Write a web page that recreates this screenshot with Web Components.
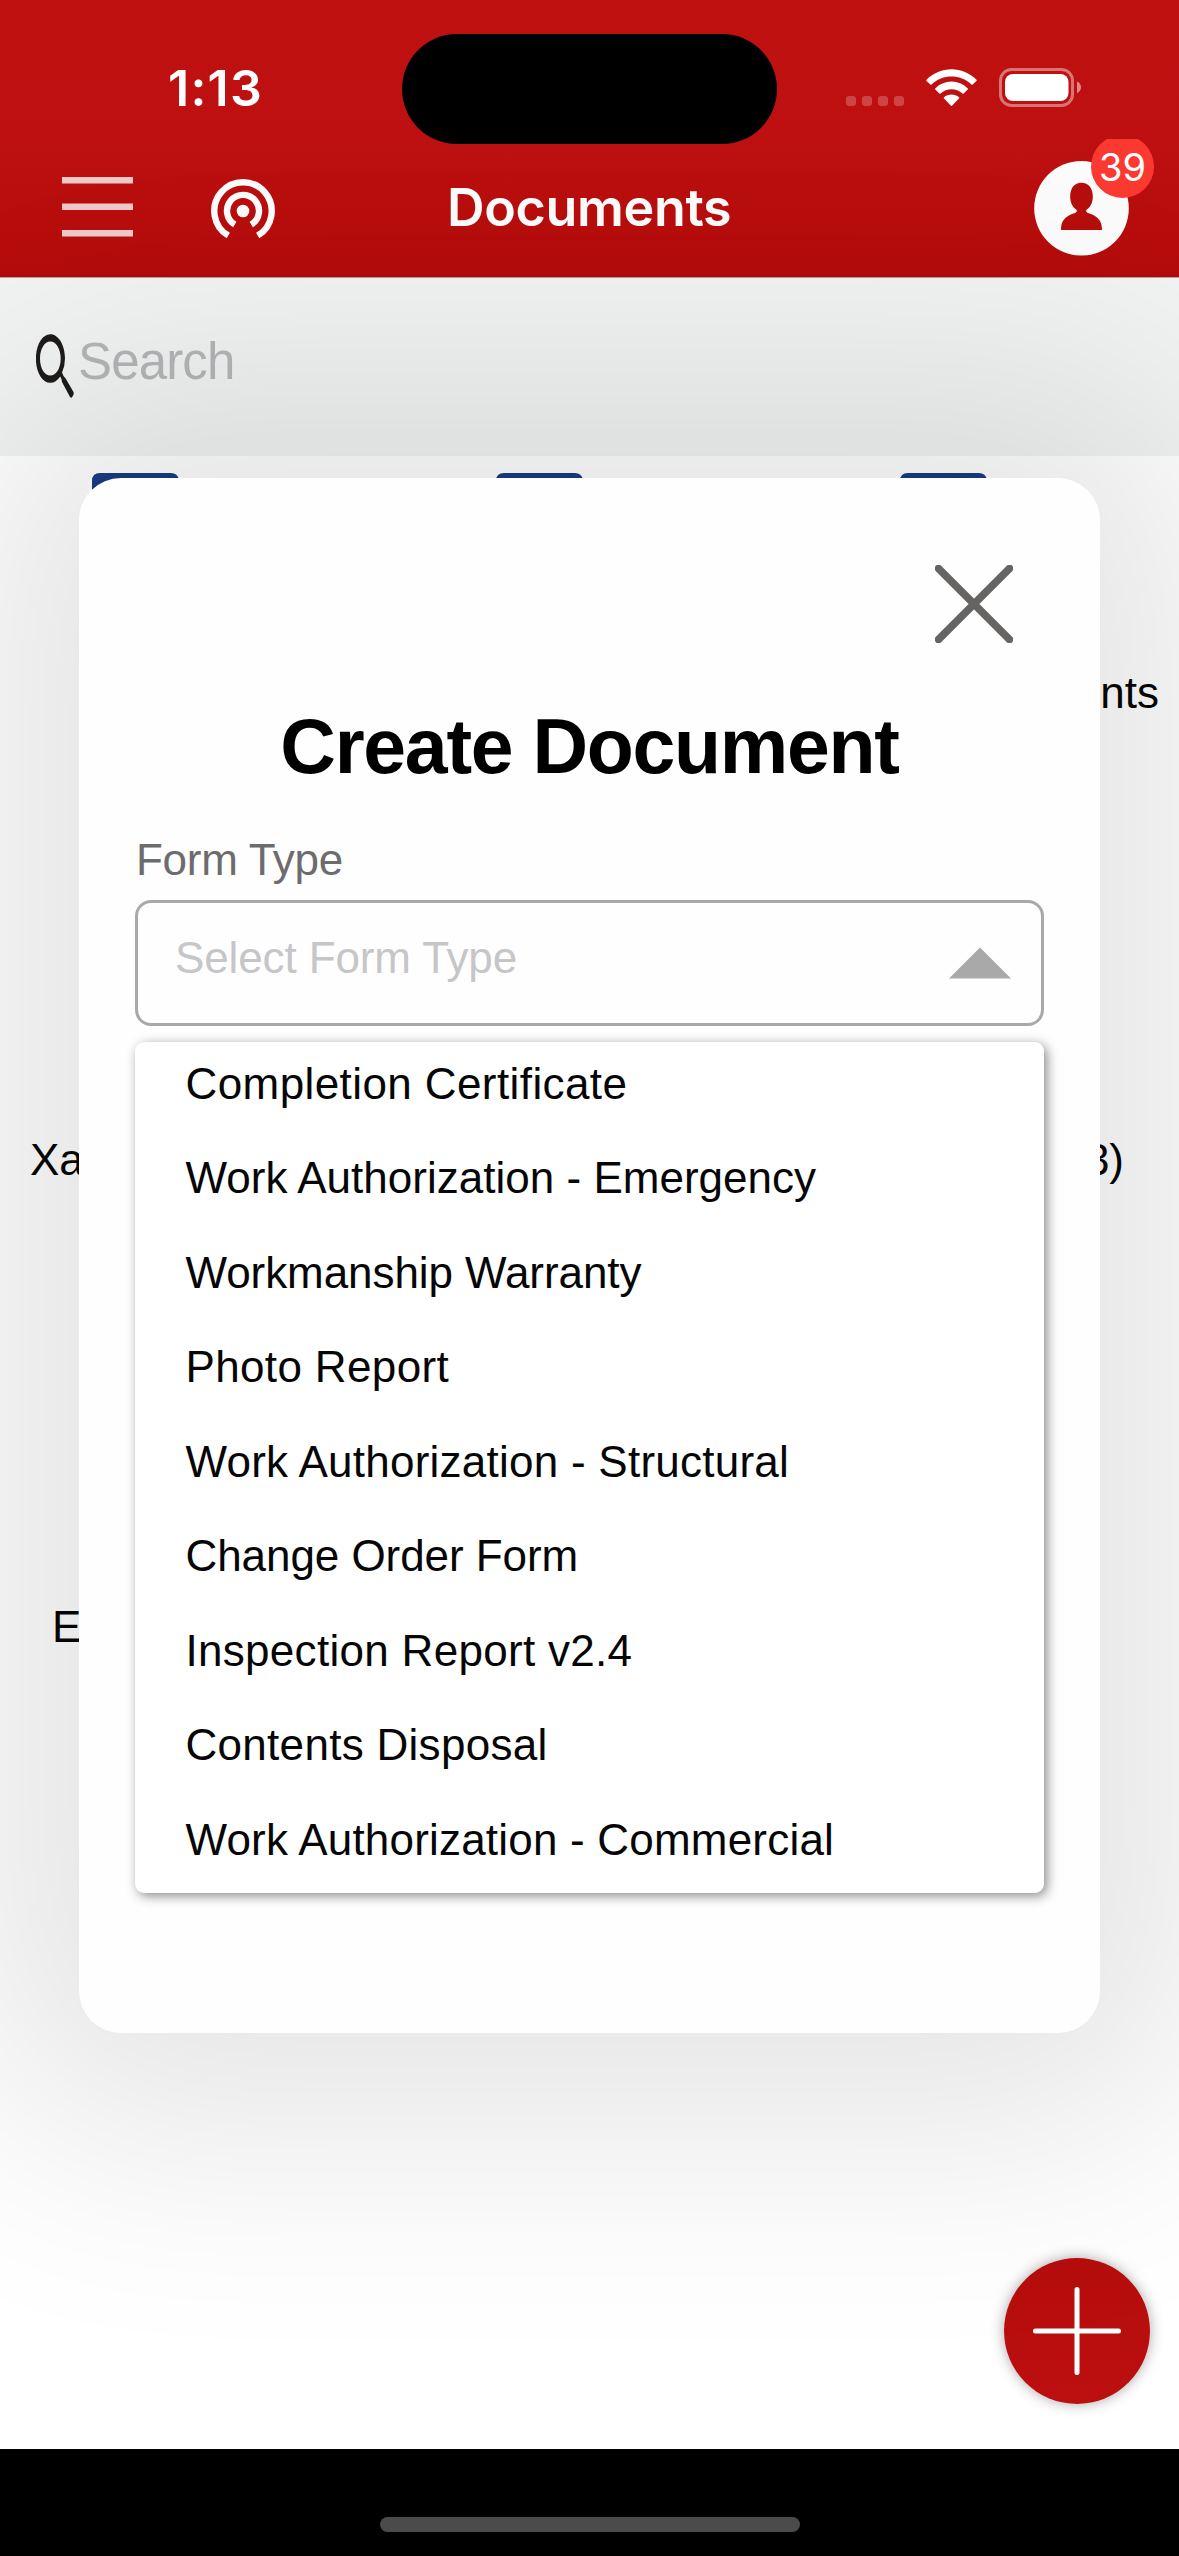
<!DOCTYPE html>
<html lang="en">
<head>
<meta charset="utf-8">
<title>Documents</title>
<style>
html,body{margin:0;padding:0;background:#fff}
body{width:1179px;height:2556px;overflow:hidden;font-family:"Liberation Sans",Arial,sans-serif}
</style>
</head>
<body>
<app-screen>
  <status-bar slot="top" time="1:13"></status-bar>
  <nav-bar slot="top" count="39" heading="Documents"></nav-bar>
  <search-bar slot="page"></search-bar>
  <doc-grid slot="page">
    <doc-tile></doc-tile><doc-tile></doc-tile><doc-tile side="end" inset="53">nts</doc-tile>
    <doc-tile side="start" inset="30">Xa</doc-tile><doc-tile></doc-tile><doc-tile side="end" inset="88">3)</doc-tile>
    <doc-tile side="start" inset="52">E</doc-tile><doc-tile></doc-tile><doc-tile></doc-tile>
  </doc-grid>
  <home-bar slot="page"></home-bar>
  <add-button slot="over"></add-button>
  <modal-card slot="modal" heading="Create Document">
    <form-select label="Form Type" placeholder="Select Form Type">
      <menu-item ink="438">Completion Certificate</menu-item>
      <menu-item ink="633">Work Authorization - Emergency</menu-item>
      <menu-item ink="456">Workmanship Warranty</menu-item>
      <menu-item ink="260">Photo Report</menu-item>
      <menu-item ink="603">Work Authorization - Structural</menu-item>
      <menu-item ink="388">Change Order Form</menu-item>
      <menu-item ink="442">Inspection Report v2.4</menu-item>
      <menu-item ink="357">Contents Disposal</menu-item>
      <menu-item ink="648">Work Authorization - Commercial</menu-item>
    </form-select>
  </modal-card>
</app-screen>
<script>
const define = (name, render, after) => customElements.define(name, class extends HTMLElement {
  connectedCallback() {
    if (this.shadowRoot) return;
    this.attachShadow({ mode: 'open' }).innerHTML = render(this);
    if (after) after(this);
  }
});
const at = (el, n) => el.getAttribute(n) || '';

/* A single line of text, tracked so that its ink is `ink` pixels wide. */
define('text-run', () => `<style>:host{display:block;white-space:pre}</style><slot></slot>`, el => {
  const cs = getComputedStyle(el), ctx = document.createElement('canvas').getContext('2d');
  ctx.font = `${cs.fontWeight} ${cs.fontSize} ${cs.fontFamily}`;
  const t = el.textContent, m = ctx.measureText(t);
  const ink = m.actualBoundingBoxRight + m.actualBoundingBoxLeft;
  el.style.letterSpacing = ((+at(el, 'ink') - ink) / (t.length - 1)).toFixed(3) + 'px';
});

define('app-screen', () => `<style>
:host{display:grid;position:relative;width:1179px;height:2556px;overflow:hidden;background:#fff}
.page,.modal{grid-area:1/1;min-width:0}
.page{display:flex;flex-direction:column;overflow:hidden}
.top{flex:none;height:277px;background:linear-gradient(#c01111 0,#be1010 130px,#b90e0e 200px,#b40b0b 277px);border-bottom:1px solid #a9a3a3}
.modal{display:flex;justify-content:center;align-items:flex-start;padding-top:478px}
.island{position:absolute;left:402px;top:34px;width:375px;height:110px;border-radius:55px;background:#000}
</style><div class="page"><div class="top"><slot name="top"></slot></div><slot name="page"></slot></div><slot name="over"></slot><div class="modal"><slot name="modal"></slot></div><div class="island"></div>`);

define('status-bar', el => `<style>
:host{display:flex;justify-content:space-between;align-items:flex-start;box-sizing:border-box;height:139px;padding:58px 98px 0 168px;color:#fff}
text-run{font:600 50px/60px Inter,sans-serif}
svg{margin-top:10px}
</style><text-run ink="90">${at(el,'time')}</text-run>
<svg width="235" height="39" viewBox="846 68 235 39">
<g fill="#fff" fill-opacity=".22"><rect x="846" y="96" width="10" height="10" rx="3"/><rect x="862" y="96" width="10" height="10" rx="3"/><rect x="878" y="96" width="10" height="10" rx="3"/><rect x="894" y="96" width="10" height="10" rx="3"/></g>
<path fill="#fff" d="M926.5 79.8C940 65.7 963 65.7 976.5 79.8Q977 80.400 976.500 81L972.600 84.600Q972 85 971.400 84.500C960.400 73.900 942.600 73.900 931.600 84.500Q931 85 930.400 84.600L926.500 81Q926 80.400 926.500 79.800ZM935.200 88.400C944.500 79.300 958.500 79.300 967.800 88.400Q968.200 89 967.700 89.500L963.700 93.600Q963.100 94 962.500 93.500C956.300 87.800 946.700 87.800 940.500 93.500Q939.900 94 939.300 93.600L935.300 89.500Q934.800 89 935.200 88.400ZM944 97.300C948.400 93.600 954.600 93.600 959 97.300Q959.500 97.900 959 98.500L952 105.800Q951.500 106.200 951 105.800L944 98.500Q943.500 97.900 944 97.300Z"/>
<rect x="1000.500" y="69.500" width="72" height="36" rx="11" fill="none" stroke="#fff" stroke-opacity=".42" stroke-width="3"/>
<rect x="1005" y="74" width="63.500" height="27" rx="8" fill="#fff"/>
<path d="M1077 81.500Q1081 83.500 1081 87.300T1077 93.200Z" fill="#fff" fill-opacity=".5"/>
</svg>`);

define('nav-bar', el => `<style>
:host{display:flex;align-items:flex-start;box-sizing:border-box;height:138px;padding:0 25px 0 62px;color:#fcfcfc;overflow:hidden}
svg{display:block;flex:none}
.menu{margin-top:38px}.cast{margin:40px 0 0 78px}
text-run{margin-top:39px;font:600 52px/60px Inter,sans-serif}
.title{padding-left:172px}
.avatar{position:relative;margin-left:auto;padding:22px 25px 0 0}
.badge{position:absolute;right:0;top:-4px;width:63px;height:63px;border-radius:50%;background:#fc3930;color:#fff;display:flex;justify-content:center;align-items:center}
.badge text-run{margin-top:1px;font:400 38px/46px Inter,sans-serif}
</style>
<svg class="menu" width="71" height="60" viewBox="0 0 71 60" fill="#efc9ca"><path d="M0 0H71V6.400H0ZM0 26.500H71V32.900H0ZM0 53H71V59.400H0Z"/></svg>
<svg class="cast" width="64" height="62" viewBox="-32 -32 64 62" fill="none" stroke="#fcfcfc" stroke-width="6.400"><circle r="6.300" fill="#fcfcfc" stroke="none"/><path d="M-14.700 24.600A28.700 28.700 0 1 1 14.700 24.600M-8.200 13.600A16 16 0 1 1 8.200 13.600"/></svg>
<div class="title"><text-run ink="280">${at(el,'heading')}</text-run></div>
<div class="avatar"><svg width="95" height="95" viewBox="0 0 95 95"><circle cx="47.500" cy="47.300" r="47.300" fill="#fbfbfb"/><path fill="#b60d0d" d="M47.500 21.800C54.700 21.800 58.800 27.500 58.800 35.500C58.800 41.500 56.700 45.800 52.800 48.500C51.500 50 52.200 51 54 52C64.500 55.500 68 60 68 69H27C27 60 30.500 55.500 41 52C42.800 51 43.500 50 42.200 48.500C38.300 45.800 36.200 41.500 36.200 35.500C36.200 27.500 40.300 21.800 47.500 21.800Z"/></svg>
<div class="badge"><text-run ink="43.500">${at(el,'count')}</text-run></div></div>`);

define('search-bar', () => `<style>
:host{display:flex;align-items:flex-start;flex:none;box-sizing:border-box;height:178px;padding:55px 0 0 36px;background:#f2f4f4;color:#b5b6b7}
text-run{font-size:51px;line-height:58px}
svg{margin-right:4px;flex:none}
</style><svg width="38" height="66" viewBox="36 333 38 66"><path fill="#1d1c1a" fill-rule="evenodd" d="M50.300 334.200C58.500 334.200 65 345 65 358.500Q65 366 62 372.500Q63 376 65.500 378.200L73.500 392Q74 393.500 73.400 395L71.800 397.600Q70.800 398 70 397L62 382Q61.500 378 60.200 376.500Q56 382.800 50.300 382.800C42.100 382.800 35.900 372 35.900 358.500C35.900 345 42.100 334.200 50.300 334.200ZM50.300 341.600C44.500 341.600 40 349 40 358.700C40 368 44.500 375.500 50.300 375.500C56.100 375.500 60.700 368 60.700 358.700C60.700 349 56.100 341.600 50.300 341.600Z"/></svg>
<text-run ink="153">Search</text-run>`);

define('doc-grid', () => `<style>
:host{display:grid;grid-template-columns:repeat(3,404px);grid-auto-rows:467px;align-content:start;flex:none;box-sizing:border-box;height:1993px;padding-top:17px}
</style><slot></slot>`);

define('doc-tile', el => `<style>
:host{display:flex;flex-direction:column;color:#060606;font-size:44px;line-height:50px}
svg{display:block;margin-left:92px}
.label{padding:15px ${at(el,'inset')||0}px 0;text-align:${at(el,'side')||'center'}}
</style><svg width="190" height="180" viewBox="0 0 190 180"><path fill="#193d82" d="M0 8Q0 0 8 0H79Q85 0 87 6V20H182Q190 20 190 28V172Q190 180 182 180H8Q0 180 0 172Z"/></svg>
<div class="label"><slot></slot></div>`);

define('home-bar', () => `<style>
:host{display:flex;justify-content:center;flex:none;box-sizing:border-box;height:108px;padding-top:68px;background:#000}
i{width:420px;height:15px;border-radius:8px;background:#4b4b4b}
</style><i></i>`);

/* Floating action button, drawn over the page. */
define('add-button', () => `<style>
:host{display:block;position:absolute;left:1004px;top:2258px;width:146px;height:146px;border-radius:50%;background:linear-gradient(#b60d0d,#bc0f0f);box-shadow:0 0 14px rgba(0,0,0,.34)}
svg{display:block}
</style><svg width="146" height="146" viewBox="0 0 146 146" stroke="#fff" stroke-width="5" stroke-linecap="round"><path d="M31.500 73H114.500M73 31.500V114.500"/></svg>`);

define('modal-card', el => `<style>
:host{display:flex;flex-direction:column;position:relative;box-sizing:border-box;width:1021px;height:1555px;padding:87px 56px 0;border-radius:42px;background:#fefefe;box-shadow:0 0 240px 100px rgba(8,8,0,.104)}
svg{align-self:flex-end;margin-right:31px}
.h{display:flex;justify-content:center;margin-top:59px;height:129px}
text-run{font:bold 77px/88px "Liberation Sans",sans-serif;color:#000}
</style><svg width="78" height="78" viewBox="0 0 78 78" stroke="#656463" stroke-width="7.500" stroke-linecap="round"><path d="M3.500 3.500L74.500 74.500M74.500 3.500L3.500 74.500"/></svg>
<div class="h"><text-run ink="616">${at(el,'heading')}</text-run></div><slot></slot>`);

define('form-select', el => `<style>
:host{display:flex;flex-direction:column;font-size:44px;line-height:50px}
.label{box-sizing:border-box;color:#6c6c6e;padding:4px 0 0 1px;height:69px}
.box{display:flex;justify-content:space-between;box-sizing:border-box;height:126px;padding:30px 30px 0 37px;border:3px solid #a9a9a9;border-radius:16px;color:#c6c6c8}
.box svg{margin-top:14px}
.list{margin-top:16px;height:851px;border-radius:9px;background:#fff;box-shadow:3px 3px 12px rgba(0,0,0,.46)}
</style><div class="label"><text-run ink="203.500">${at(el,'label')}</text-run></div>
<div class="box"><text-run ink="339.500">${at(el,'placeholder')}</text-run><svg width="62" height="32" viewBox="0 0 62 32"><path fill="#a9a9a9" d="M31 .500L62 31.500H0Z"/></svg></div>
<div class="list"><slot></slot></div>`);

define('menu-item', el => `<style>
:host{display:block;height:94.450px;line-height:83px;padding-left:50.500px;color:#060606}
</style><text-run ink="${at(el,'ink')}">${el.textContent}</text-run>`);
</script>
</body>
</html>
